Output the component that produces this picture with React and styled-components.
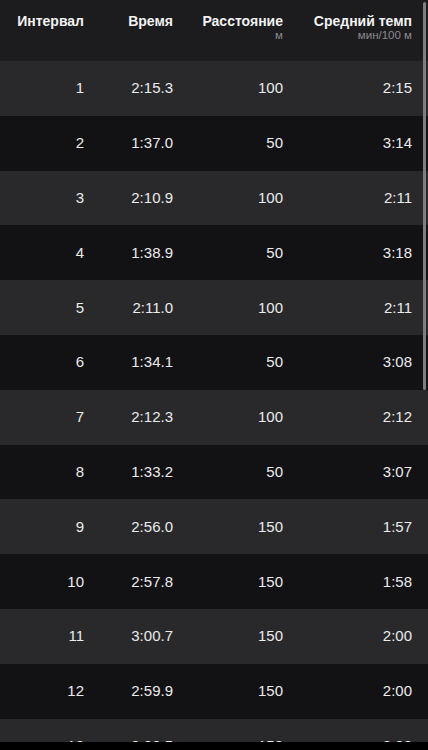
import React from "react";
import styled, { createGlobalStyle } from "styled-components";

const Global = createGlobalStyle`
  html, body { margin: 0; padding: 0; background: #000; }
  body { font-family: "Liberation Sans", Arial, sans-serif; -webkit-font-smoothing: antialiased; }
`;

const Screen = styled.div`
  position: relative;
  width: 428px;
  height: 742px;
  overflow: hidden;
  background: #111113;
`;

const Grid = styled.div`
  display: grid;
  grid-template-columns: 84px 89px 110px 129px 16px;
`;

const HeaderRow = styled(Grid)`
  height: 61px;
  background: #1c1c1e;
  align-items: start;
  padding-top: 13px;
  box-sizing: border-box;
`;

const HeadCell = styled.div`
  text-align: right;
  display: flex;
  flex-direction: column;
  align-items: flex-end;
`;

const HeadTitle = styled.span`
  color: #f2f2f4;
  font-weight: 700;
  font-size: 14px;
  line-height: 17px;
  white-space: nowrap;
`;

const HeadSub = styled.span`
  color: #8a8a8e;
  font-size: 11.5px;
  line-height: 12px;
  margin-top: -1px;
  white-space: nowrap;
`;

const Row = styled(Grid)`
  height: 54.8px;
  align-items: center;
  background: ${(p) => (p.$odd ? "#29292b" : "#121114")};
`;

const Cell = styled.div`
  text-align: right;
  color: #ebebed;
  font-size: 15px;
  line-height: 18px;
  white-space: nowrap;
`;

const Scrollbar = styled.div`
  position: absolute;
  left: 423px;
  top: 2px;
  width: 3px;
  height: 388px;
  border-radius: 2px;
  background: #7d7d82;
`;

const data = [
  ["1", "2:15.3", "100", "2:15"],
  ["2", "1:37.0", "50", "3:14"],
  ["3", "2:10.9", "100", "2:11"],
  ["4", "1:38.9", "50", "3:18"],
  ["5", "2:11.0", "100", "2:11"],
  ["6", "1:34.1", "50", "3:08"],
  ["7", "2:12.3", "100", "2:12"],
  ["8", "1:33.2", "50", "3:07"],
  ["9", "2:56.0", "150", "1:57"],
  ["10", "2:57.8", "150", "1:58"],
  ["11", "3:00.7", "150", "2:00"],
  ["12", "2:59.9", "150", "2:00"],
  ["13", "3:00.5", "150", "2:00"],
];

export default function App() {
  return (
    <>
      <Global />
      <Screen>
        <HeaderRow>
          <HeadCell><HeadTitle>Интервал</HeadTitle></HeadCell>
          <HeadCell><HeadTitle>Время</HeadTitle></HeadCell>
          <HeadCell>
            <HeadTitle>Расстояние</HeadTitle>
            <HeadSub>м</HeadSub>
          </HeadCell>
          <HeadCell>
            <HeadTitle>Средний темп</HeadTitle>
            <HeadSub>мин/100 м</HeadSub>
          </HeadCell>
          <div />
        </HeaderRow>
        {data.map((r, i) => (
          <Row key={r[0]} $odd={i % 2 === 0}>
            {r.map((v, j) => (
              <Cell key={j}>{v}</Cell>
            ))}
            <div />
          </Row>
        ))}
        <Scrollbar />
      </Screen>
    </>
  );
}
